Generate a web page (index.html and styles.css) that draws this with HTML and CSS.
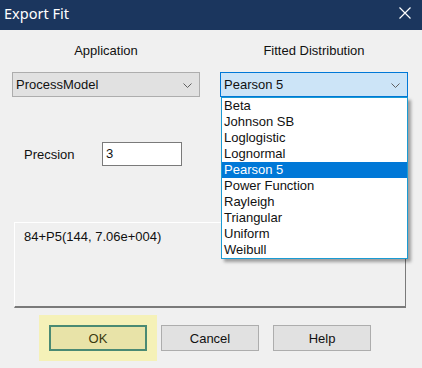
FILE: index.html
```html
<!DOCTYPE html>
<html lang="en">
<head>
  <meta charset="UTF-8">
  <meta name="viewport" content="width=device-width, initial-scale=1.0">
  <title>Export Fit</title>
  <link rel="stylesheet" href="styles.css">
</head>
<body>
  <div class="dialog">
    <div class="titlebar">
      <span class="title">Export Fit</span>
      <svg class="close" width="12" height="12" viewBox="0 0 12 12">
        <path d="M0.5 0.5 L11.5 11.5 M11.5 0.5 L0.5 11.5" stroke="#fff" stroke-width="1.2" fill="none"/>
      </svg>
    </div>

    <div class="content">
      <div class="columns">
        <div class="column">
          <div class="label">Application</div>
          <div class="combo">
            <span>ProcessModel</span>
            <svg class="chevron" width="9" height="5" viewBox="0 0 9 5">
              <polyline points="0.5,0.5 4.5,4.5 8.5,0.5" stroke="#606060" fill="none"/>
            </svg>
          </div>
        </div>
        <div class="column">
          <div class="label">Fitted Distribution</div>
          <div class="combo combo-open">
            <span>Pearson 5</span>
            <svg class="chevron" width="9" height="5" viewBox="0 0 9 5">
              <polyline points="0.5,0.5 4.5,4.5 8.5,0.5" stroke="#606060" fill="none"/>
            </svg>
            <ul class="dropdown">
              <li>Beta</li>
              <li>Johnson SB</li>
              <li>Loglogistic</li>
              <li>Lognormal</li>
              <li class="selected">Pearson 5</li>
              <li>Power Function</li>
              <li>Rayleigh</li>
              <li>Triangular</li>
              <li>Uniform</li>
              <li>Weibull</li>
            </ul>
          </div>
        </div>
      </div>

      <div class="precision">
        <span class="precision-label">Precsion</span>
        <div class="textbox">3</div>
      </div>

      <div class="result">84+P5(144, 7.06e+004)</div>

      <div class="buttons">
        <button class="btn btn-default">OK</button>
        <button class="btn">Cancel</button>
        <button class="btn">Help</button>
      </div>
    </div>
  </div>
</body>
</html>
```

FILE: styles.css
```css
* {
  margin: 0;
  padding: 0;
  box-sizing: border-box;
}

body {
  width: 422px;
  height: 368px;
  overflow: hidden;
  background: #f0f0f0;
  font-family: 'Liberation Sans', Arial, sans-serif;
  font-size: 13px;
  color: #111;
}

.titlebar {
  height: 30px;
  background: #1b365e;
  display: flex;
  align-items: center;
  justify-content: space-between;
  padding: 0 11px 4px 4px;
}

.title {
  font-family: 'Noto Sans', 'Open Sans', sans-serif;
  font-size: 14.5px;
  color: #fff;
}

.content {
  padding: 13px 15px 0 12px;
}

.columns {
  display: grid;
  grid-template-columns: 188px 188px;
  gap: 20px;
}

.label {
  height: 15px;
  line-height: 15px;
  text-align: center;
  margin-bottom: 14px;
}

.combo {
  position: relative;
  height: 25px;
  display: flex;
  align-items: center;
  justify-content: space-between;
  padding: 0 7px 0 3px;
  background: #e1e1e1;
  border: 1px solid #adadad;
}

.combo-open {
  background: #cce4f7;
  border-color: #0078d7;
}

.chevron {
  margin-top: 1px;
}

.dropdown {
  position: absolute;
  top: 24px;
  left: 0;
  width: 187px;
  list-style: none;
  background: #fff;
  border: 1px solid #1a9bd3;
  box-shadow: 3px 3px 3px rgba(0, 0, 0, 0.35);
  z-index: 2;
}

.dropdown li {
  height: 16px;
  line-height: 16px;
  padding-left: 2px;
}

.dropdown li.selected {
  background: #0078d7;
  color: #fff;
}

.precision {
  display: flex;
  align-items: center;
  margin-top: 45px;
  padding-left: 12px;
}

.precision-label {
  width: 78px;
}

.textbox {
  width: 80px;
  height: 24px;
  line-height: 22px;
  padding-left: 3px;
  background: #fff;
  border: 1px solid #7a7a7a;
}

.result {
  margin: 56px 1px 0 2px;
  height: 86px;
  padding: 6px 9px;
  border-top: 1px solid #fff;
  border-left: 1px solid #fff;
  border-right: 1px solid #7a7a7a;
  border-bottom: 2px solid #7a7a7a;
}

.buttons {
  display: flex;
  gap: 14px;
  margin-top: 17px;
  padding-left: 37px;
}

.btn {
  width: 98px;
  height: 26px;
  font-family: inherit;
  font-size: 13px;
  color: #111;
  background: #e1e1e1;
  border: 1px solid #adadad;
}

.btn-default {
  background: #e8e3a8;
  border: 2px solid #4a8a73;
  color: #3a3a10;
  box-shadow: 0 0 0 10px #f5f1b8;
}
```
